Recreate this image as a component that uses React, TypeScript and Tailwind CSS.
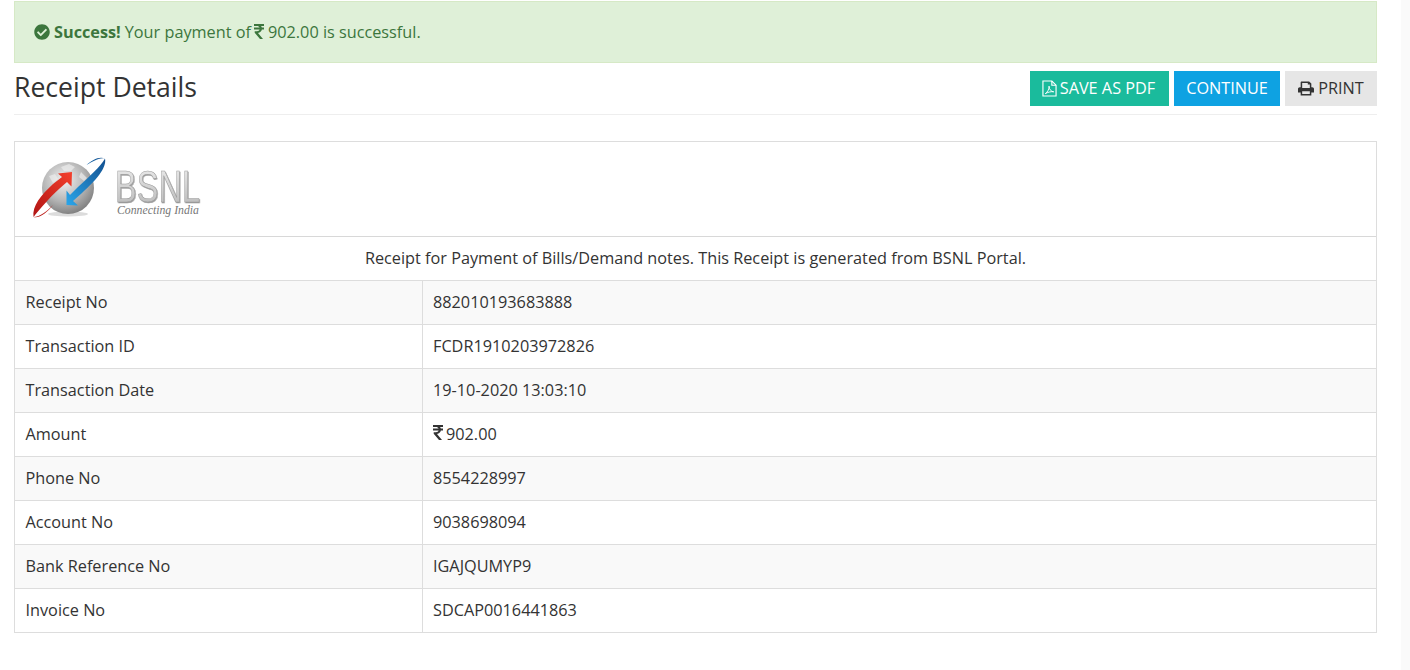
import React from "react";

function Rupee({ className }: { className?: string }) {
  return (
    <svg viewBox="0 0 10 15" className={className} fill="currentColor">
      <path d="M0 0H10V2H7C7.4 2.5 7.7 3 7.85 3.6H10V5.6H7.9C7.5 7.5 6 8.8 4 9.1L9 15H6L0.7 8.8V7.2H3C4.4 7.2 5.3 6.6 5.6 5.6H0V3.6H5.6C5.2 2.6 4.3 2 3 2H0Z" />
    </svg>
  );
}

const rows: [string, React.ReactNode][] = [
  ["Receipt No", "882010193683888"],
  ["Transaction ID", "FCDR1910203972826"],
  ["Transaction Date", "19-10-2020 13:03:10"],
  ["Amount", <span className="inline-flex items-center"><Rupee className="mr-[3px] mb-[3px] h-[15px] w-[10px]" />902.00</span>],
  ["Phone No", "8554228997"],
  ["Account No", "9038698094"],
  ["Bank Reference No", "IGAJQUMYP9"],
  ["Invoice No", "SDCAP0016441863"],
];

function Logo() {
  return (
    <svg width="180" height="68" viewBox="0 0 180 68" className="block">
      <defs>
        <radialGradient id="globe" cx="0.42" cy="0.35" r="0.75">
          <stop offset="0" stopColor="#f2f2f2" />
          <stop offset="0.55" stopColor="#b4b4b4" />
          <stop offset="1" stopColor="#6e6e6e" />
        </radialGradient>
        <linearGradient id="red" x1="0" y1="1" x2="1" y2="0">
          <stop offset="0" stopColor="#b01414" />
          <stop offset="1" stopColor="#f4402c" />
        </linearGradient>
        <linearGradient id="blue" x1="1" y1="0" x2="0" y2="1">
          <stop offset="0" stopColor="#124f8f" />
          <stop offset="1" stopColor="#2aa6ea" />
        </linearGradient>
        <linearGradient id="letters" x1="0" y1="0" x2="0" y2="1">
          <stop offset="0" stopColor="#efefef" />
          <stop offset="1" stopColor="#b5b5b5" />
        </linearGradient>
      </defs>
      <ellipse cx="37" cy="60" rx="20" ry="2.5" fill="#dcdcdc" />
      <circle cx="37" cy="34" r="26" fill="url(#globe)" />
      <path d="M30 13l8-3 6 3-4 4-7 0zM18 22l6-2 3 5-5 4zM50 18l6 6-3 3-5-4z" fill="#ececec" opacity="0.7" />
      <path d="M2.5 63C1 52 10 41 22 30L31 23L27 19.5L41 18L40.5 32.5L36 28L28 35C18 44 9 55 2.5 63C9 63 16 57 22 51C17 58 8 65 2.5 63Z" fill="url(#red)" />
      <path d="M74 4.5C76 14 65 26 51 39L42 47L47 51.5L35.5 51L35.5 36.5L39 41L47 33C58 23 70 12 74 4.5C68 2 61 6 55.5 11C61 8 68 3 74 4.5Z" fill="url(#blue)" />
      <text
        transform="translate(84 48) scale(0.74 1)"
        fontFamily="'Liberation Sans', sans-serif"
        fontSize="44"
        fill="url(#letters)"
        stroke="#9a9a9a"
        strokeWidth="0.5"
        className="drop-shadow-[1px_1px_0_#999]"
      >
        BSNL
      </text>
      <text
        transform="translate(86 60) scale(0.98 1)"
        fontFamily="'Liberation Serif', serif"
        fontStyle="italic"
        fontSize="12"
        fill="#777"
      >
        Connecting India
      </text>
    </svg>
  );
}

export default function App() {
  return (
    <div className="relative min-h-[670px] bg-white pt-px pr-[33px] pl-[14px] font-['Open_Sans',sans-serif] text-[16.25px] text-[#333]">
      <div className="flex h-[62px] items-center border border-[#d6e9c6] bg-[#dff0d8] pl-[19px] text-[#3c763d]">
        <svg viewBox="0 0 512 512" className="mr-[4px] h-[16px] w-[16px]" fill="currentColor">
          <path d="M504 256c0 137-111 248-248 248S8 393 8 256 119 8 256 8s248 111 248 248zM227 387l184-184c6-6 6-16 0-22l-23-23c-6-6-16-6-22 0L216 308l-70-70c-6-6-16-6-22 0l-23 23c-6 6-6 16 0 22l104 104c6 6 16 6 22 0z" />
        </svg>
        <b className="font-bold">Success!</b>
        <span className="ml-[4px]">Your payment of</span>
        <Rupee className="mr-[4px] ml-[3px] mb-[2px] h-[15px] w-[10px]" />
        <span>902.00 is successful.</span>
      </div>

      <div className="mt-[8px] flex h-[44px] items-start justify-between border-b border-[#eee]">
        <h1 className="text-[26.6px] leading-[32px] text-[#333]">Receipt Details</h1>
        <div className="flex gap-[5px] text-[16.25px]">
          <button className="flex h-[35px] w-[139px] items-center justify-center bg-[#1abb9c] pr-[2px] pb-[1px] text-white">
            <svg viewBox="0 0 16 18" className="mr-[3px] h-[17px] w-[15px]" fill="none" stroke="currentColor" strokeWidth="1.2">
              <path d="M1 1H10.5L15 5.5V17H1Z" />
              <path d="M10.5 1V5.5H15" />
              <path d="M3.5 14.5C6 13 8 9 7.5 6.5C7.5 10 10 12.5 12.5 12.5C9.5 12 6 13 3.5 14.5Z" strokeWidth="1" />
            </svg>
            SAVE AS PDF
          </button>
          <button className="flex h-[35px] w-[106px] items-center justify-center bg-[#0ea2e2] pb-[1px] text-white">CONTINUE</button>
          <button className="flex h-[35px] w-[92px] items-center justify-center bg-[#e6e6e6] pb-[1px] text-[#333]">
            <svg viewBox="0 0 18 16" className="mr-[4px] h-[15px] w-[16px]" fill="currentColor">
              <path d="M4 0H12.5L15 2.5V6.5H16C17.1 6.5 18 7.4 18 8.5V12.5H15V16H3V12.5H0V8.5C0 7.4 .9 6.5 2 6.5H3V1C3 .5 3.5 0 4 0ZM4.7 1.7V7.5H13.3V3.5H11V1.7ZM4.7 11V14.3H13.3V11Z" fillRule="evenodd" />
            </svg>
            PRINT
          </button>
        </div>
      </div>

      <div className="mt-[26px] border border-[#ddd]">
        <div className="h-[95px] border-b border-[#d8d8d8] pt-[12px] pl-[16px]">
          <Logo />
        </div>
        <div className="flex h-[44px] items-center justify-center border-b border-[#ddd] pb-[1px]">
          Receipt for Payment of Bills/Demand notes. This Receipt is generated from BSNL Portal.
        </div>
        {rows.map(([label, value], i) => (
          <div
            key={label}
            className={`flex ${i < rows.length - 1 ? "h-[44px] border-b border-[#ddd]" : "h-[43px]"} ${i % 2 === 0 ? "bg-[#f9f9f9]" : "bg-white"}`}
          >
            <div className="flex w-[408px] items-center border-r border-[#ddd] pb-[1px] pl-[10.5px]">{label}</div>
            <div className="flex flex-1 items-center pb-[1px] pl-[10px]">{value}</div>
          </div>
        ))}
      </div>
      <div className="absolute top-0 right-0 bottom-0 w-[9px] bg-[#fafafa]" />
    </div>
  );
}
